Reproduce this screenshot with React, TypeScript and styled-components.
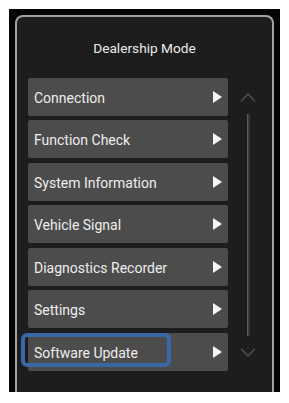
import React from "react";
import styled, { createGlobalStyle } from "styled-components";

const GlobalStyle = createGlobalStyle`
  html, body { margin: 0; padding: 0; background: #ffffff; }
  body { font-family: Roboto, "Liberation Sans", sans-serif; }
`;

const Frame = styled.div`
  margin: 9px 0 0 9px;
  width: 271px;
  height: 383px;
  box-sizing: border-box;
  padding: 6px 6px 0;
  background: #050505;
  display: flex;
`;

const Panel = styled.section`
  flex: 1;
  display: flex;
  flex-direction: column;
  border: 2px solid #a2a2a2;
  border-bottom: none;
  border-radius: 8px 8px 0 0;
  background: #1d1d1d;
  overflow: hidden;
`;

const Title = styled.h1`
  margin: 0;
  height: 60.5px;
  box-sizing: border-box;
  padding-top: 21px;
  text-align: center;
  font: 400 13.7px/20px Roboto, "Liberation Sans", sans-serif;
  color: #ececec;
`;

const Body = styled.div`
  display: flex;
  padding: 0 4px 0 11px;
`;

const List = styled.div`
  width: 200px;
  display: flex;
  flex-direction: column;
  gap: 4.5px;
`;

const Row = styled.div`
  position: relative;
  height: 38px;
  box-sizing: border-box;
  padding: 0 6px 0 6px;
  display: flex;
  align-items: center;
  justify-content: space-between;
  background: #4c4c4c;
  border-radius: 2px;
  color: #eeeeee;
  font: 400 14px Roboto, "Liberation Sans", sans-serif;
`;

const Label = styled.span`
  padding-top: 2px;
  position: relative;
  z-index: 1;
`;

const Arrow = styled.span`
  width: 0;
  height: 0;
  border-top: 6.2px solid transparent;
  border-bottom: 6.2px solid transparent;
  border-left: 9px solid #f4f4f4;
`;

const Focus = styled.div`
  position: absolute;
  left: -7.3px;
  top: 0.2px;
  width: 150px;
  height: 34px;
  box-sizing: border-box;
  border: 4px solid #3a67a6;
  border-radius: 6px;
  pointer-events: none;
`;

const ScrollColumn = styled.div`
  width: 40px;
  display: flex;
  flex-direction: column;
  align-items: center;
  padding-top: 15px;
`;

const Chevron = styled.svg`
  display: block;
  width: 16px;
  height: 9px;
`;

const Track = styled.div`
  margin: 12px 0 12px;
  width: 3px;
  height: 222px;
  background: linear-gradient(to right, #5c5c5c 0 1px, #383838 1px 3px);
`;

const items = [
  "Connection",
  "Function Check",
  "System Information",
  "Vehicle Signal",
  "Diagnostics Recorder",
  "Settings",
  "Software Update",
];

export default function App() {
  return (
    <>
      <GlobalStyle />
      <Frame>
        <Panel>
          <Title>Dealership Mode</Title>
          <Body>
            <List>
              {items.map((label) => (
                <Row key={label}>
                  {label === "Software Update" && <Focus />}
                  <Label>{label}</Label>
                  <Arrow />
                </Row>
              ))}
            </List>
            <ScrollColumn>
              <Chevron viewBox="0 0 16 9">
                <path d="M1 8.2 L8 1 L15 8.2" fill="none" stroke="#4e4e4e" strokeWidth="1.5" />
              </Chevron>
              <Track />
              <Chevron viewBox="0 0 16 9">
                <path d="M1 0.8 L8 8 L15 0.8" fill="none" stroke="#4e4e4e" strokeWidth="1.5" />
              </Chevron>
            </ScrollColumn>
          </Body>
        </Panel>
      </Frame>
    </>
  );
}
